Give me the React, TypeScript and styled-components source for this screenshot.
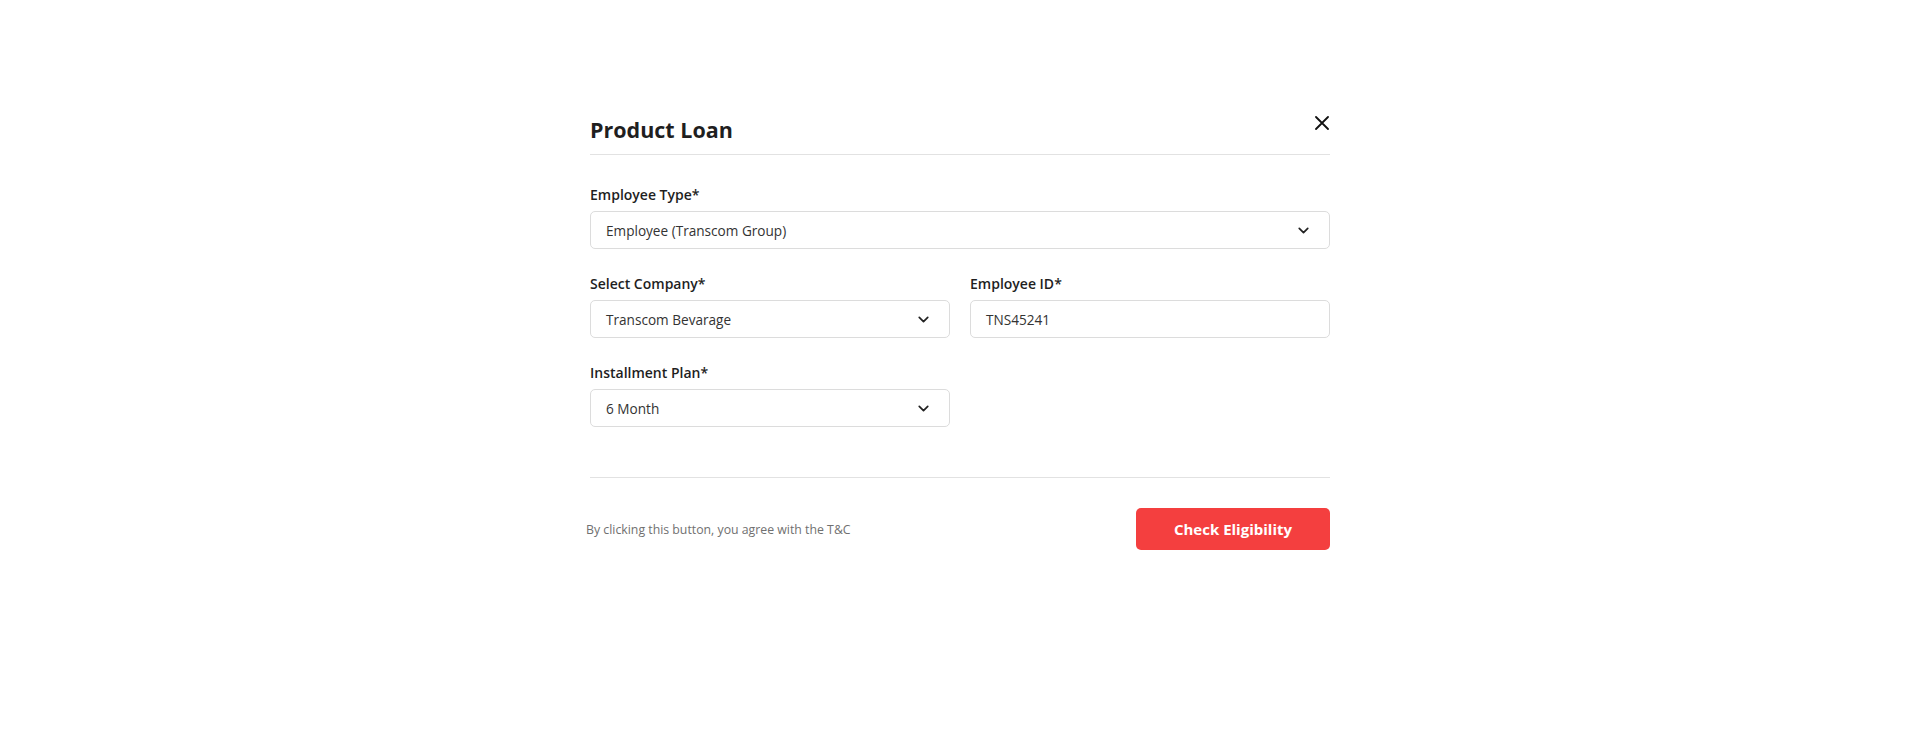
import styled, { createGlobalStyle } from "styled-components";
import { ChevronDown } from "lucide-react";

const GlobalStyle = createGlobalStyle`
  body {
    margin: 0;
    background: #fff;
    font-family: "Open Sans", "Noto Sans", sans-serif;
    color: #222;
  }
  * {
    box-sizing: border-box;
  }
`;

const Modal = styled.div`
  width: 740px;
  margin: 0 auto;
  padding-top: 115px;
`;

const Header = styled.div`
  display: flex;
  justify-content: space-between;
  align-items: flex-start;
  padding-bottom: 9px;
  border-bottom: 1px solid #e2e2e2;
`;

const Title = styled.h2`
  margin: 0;
  font-size: 21.5px;
  line-height: 30px;
  font-weight: 700;
  color: #1f1f1f;
`;

const CloseButton = styled.button`
  width: 14px;
  height: 14px;
  margin: 1px 1px 0 0;
  padding: 0;
  border: none;
  background: none;
  cursor: pointer;
  display: flex;
`;

const Form = styled.div`
  display: grid;
  grid-template-columns: 1fr 1fr;
  column-gap: 20px;
  row-gap: 25px;
  padding-top: 30px;
  padding-bottom: 50px;
  border-bottom: 1px solid #e2e2e2;
`;

const Field = styled.div<{ $full?: boolean }>`
  display: flex;
  flex-direction: column;
  gap: 6px;
  grid-column: ${(p) => (p.$full ? "1 / -1" : "auto")};
`;

const Label = styled.label`
  font-size: 14px;
  line-height: 20px;
  font-weight: 600;
  color: #1f1f1f;
`;

const Box = styled.div`
  height: 38px;
  display: flex;
  align-items: center;
  justify-content: space-between;
  padding: 0 17px 0 15px;
  border: 1px solid #dcdcdc;
  border-radius: 5px;
  font-size: 13.6px;
  color: #333;
  background: #fff;
`;

const Footer = styled.div`
  display: flex;
  justify-content: space-between;
  align-items: center;
  padding-top: 30px;
`;

const Terms = styled.span`
  margin-left: -4px;
  font-size: 12.3px;
  color: #707070;
`;

const SubmitButton = styled.button`
  width: 194px;
  height: 42px;
  border: none;
  border-radius: 5px;
  background: #f43f3f;
  color: #fff;
  font-family: "Open Sans", "Noto Sans", sans-serif;
  font-size: 15px;
  font-weight: 700;
  cursor: pointer;
`;

function SelectBox({ value }: { value: string }) {
  return (
    <Box>
      <span>{value}</span>
      <ChevronDown size={17} strokeWidth={2.4} color="#222" />
    </Box>
  );
}

export default function App() {
  return (
    <>
      <GlobalStyle />
      <Modal>
        <Header>
          <Title>Product Loan</Title>
          <CloseButton aria-label="Close">
            <svg width="14" height="14" viewBox="0 0 14 14">
              <path d="M1 1 13 13 M13 1 1 13" stroke="#111" strokeWidth="1.8" strokeLinecap="round" />
            </svg>
          </CloseButton>
        </Header>
        <Form>
          <Field $full>
            <Label>Employee Type*</Label>
            <SelectBox value="Employee (Transcom Group)" />
          </Field>
          <Field>
            <Label>Select Company*</Label>
            <SelectBox value="Transcom Bevarage" />
          </Field>
          <Field>
            <Label>Employee ID*</Label>
            <Box>TNS45241</Box>
          </Field>
          <Field>
            <Label>Installment Plan*</Label>
            <SelectBox value="6 Month" />
          </Field>
        </Form>
        <Footer>
          <Terms>By clicking this button, you agree with the T&amp;C</Terms>
          <SubmitButton>Check Eligibility</SubmitButton>
        </Footer>
      </Modal>
    </>
  );
}
